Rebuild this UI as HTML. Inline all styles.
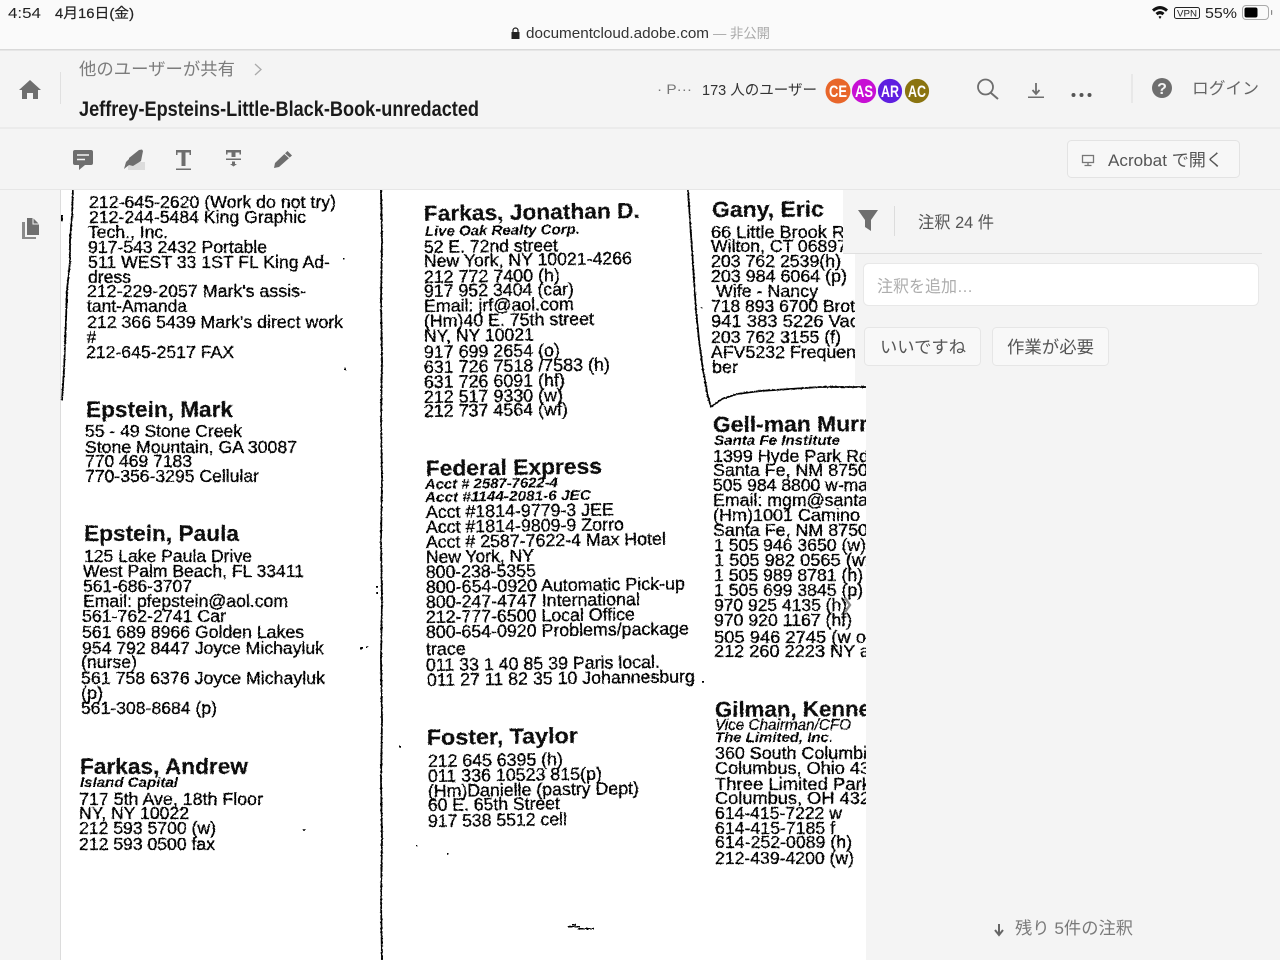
<!DOCTYPE html>
<html lang="ja">
<head>
<meta charset="utf-8">
<title>Jeffrey-Epsteins-Little-Black-Book-unredacted</title>
<style>
html,body{margin:0;padding:0;width:1280px;height:960px;overflow:hidden;background:#f4f4f4}
svg{display:block;position:absolute;left:0;top:0}
text{font-family:"Liberation Sans","Noto Sans CJK JP",sans-serif}
.b{font-size:17.7px;fill:#000;stroke:#000;stroke-width:.3px}
.h{font-size:22px;font-weight:bold;fill:#111;stroke:#111;stroke-width:.15px}
.i{font-size:14px;font-weight:bold;font-style:italic;fill:#000}
.v{font-size:16px;font-style:italic;fill:#000;stroke:#000;stroke-width:.2px}
.r{transform-box:fill-box;transform-origin:0 100%;transform:rotate(-.8deg)}
.q{transform-box:fill-box;transform-origin:0 100%;transform:rotate(-.3deg)}
.u{font-size:16.5px;fill:#555}
</style>
</head>
<body>
<svg width="1280" height="960" viewBox="0 0 1280 960" xmlns="http://www.w3.org/2000/svg">
<defs>
<filter id="scan" filterUnits="userSpaceOnUse" x="0" y="180" width="900" height="780">
<feTurbulence type="fractalNoise" baseFrequency=".55" numOctaves="2" seed="4" result="n"/>
<feDisplacementMap in="SourceGraphic" in2="n" scale="1.8" xChannelSelector="R" yChannelSelector="G"/>
</filter>
</defs>
<!-- backgrounds -->
<rect width="1280" height="960" fill="#f4f4f4"/>
<rect x="61" y="190" width="805" height="770" fill="#fff"/>
<rect x="60" y="190" width="1" height="770" fill="#dcdcdc"/>

<g filter="url(#scan)">
<!-- document rules -->
<g fill="none" stroke="#000" stroke-linejoin="round">
<polyline stroke-width="1.800" points="73,190 72,215 70,240 70,262 67,290 66,320 65,345 64,370 62,400"/>
<polyline stroke-width="1.800" points="381,190 382,240 381,300 382,360 381,420 382,480 381,540 382,600 381,660 382,720 381,780 382,840 381,900 382,960"/>
<polyline stroke-width="1.800" points="688,190 690,220 692,250 694,280 696,310 699,340 703,370 708,397 711,407"/>
<polyline stroke-width="1.800" points="711,407 722,399 737,394 760,391 790,389 820,387 866,387"/>
</g>
<!-- specks -->
<g fill="#000">
<rect x="61" y="215" width="2" height="6"/><rect x="344" y="368" width="2" height="2"/><rect x="343" y="258" width="1.500" height="1.500"/>
<rect x="376" y="586" width="2" height="2"/><rect x="376" y="592" width="2" height="2"/><rect x="360" y="647" width="3" height="2"/><rect x="366" y="646" width="2" height="2"/><rect x="303" y="829" width="2" height="2"/>
<rect x="399" y="746" width="2" height="1.500"/><rect x="416" y="845" width="1.500" height="1.500"/><rect x="447" y="853" width="1.500" height="1.500"/>
<rect x="702" y="681" width="2" height="1.500"/><rect x="701" y="307" width="1.500" height="1.500"/>
<rect x="568" y="926" width="12" height="1.500"/><rect x="578" y="928" width="16" height="1.500"/><rect x="572" y="924" width="4" height="1.500"/>
</g>

<!-- column 1 -->
<text class="b" x="89" y="208" textLength="247" lengthAdjust="spacingAndGlyphs">212-645-2620 (Work do not try)</text>
<text class="b" x="89" y="223" textLength="217" lengthAdjust="spacingAndGlyphs">212-244-5484 King Graphic</text>
<text class="b" x="88" y="238" textLength="80" lengthAdjust="spacingAndGlyphs">Tech., Inc.</text>
<text class="b" x="88" y="253" textLength="179" lengthAdjust="spacingAndGlyphs">917-543 2432 Portable</text>
<text class="b" x="88" y="268" textLength="242" lengthAdjust="spacingAndGlyphs">511 WEST 33 1ST FL King Ad-</text>
<text class="b" x="88" y="283" textLength="43" lengthAdjust="spacingAndGlyphs">dress</text>
<text class="b" x="87" y="297" textLength="219" lengthAdjust="spacingAndGlyphs">212-229-2057 Mark's assis-</text>
<text class="b" x="87" y="312" textLength="100" lengthAdjust="spacingAndGlyphs">tant-Amanda</text>
<text class="b" x="87" y="328" textLength="256" lengthAdjust="spacingAndGlyphs">212 366 5439 Mark's direct work</text>
<text class="b" x="87" y="343" textLength="9" lengthAdjust="spacingAndGlyphs">#</text>
<text class="b" x="86" y="358" textLength="148" lengthAdjust="spacingAndGlyphs">212-645-2517 FAX</text>

<text class="h" x="86" y="417" textLength="147" lengthAdjust="spacingAndGlyphs">Epstein, Mark</text>
<text class="b" x="85" y="437" textLength="157" lengthAdjust="spacingAndGlyphs">55 - 49 Stone Creek</text>
<text class="b" x="85" y="453" textLength="212" lengthAdjust="spacingAndGlyphs">Stone Mountain, GA 30087</text>
<text class="b" x="85" y="467" textLength="107" lengthAdjust="spacingAndGlyphs">770 469 7183</text>
<text class="b" x="85" y="482" textLength="174" lengthAdjust="spacingAndGlyphs">770-356-3295 Cellular</text>

<text class="h" x="84" y="541" textLength="155" lengthAdjust="spacingAndGlyphs">Epstein, Paula</text>
<text class="b" x="84" y="562" textLength="168" lengthAdjust="spacingAndGlyphs">125 Lake Paula Drive</text>
<text class="b" x="83" y="577" textLength="221" lengthAdjust="spacingAndGlyphs">West Palm Beach, FL 33411</text>
<text class="b" x="83" y="592" textLength="109" lengthAdjust="spacingAndGlyphs">561-686-3707</text>
<text class="b" x="83" y="607" textLength="205" lengthAdjust="spacingAndGlyphs">Email: pfepstein@aol.com</text>
<text class="b" x="82" y="622" textLength="144" lengthAdjust="spacingAndGlyphs">561-762-2741 Car</text>
<text class="b" x="82" y="638" textLength="222" lengthAdjust="spacingAndGlyphs">561 689 8966 Golden Lakes</text>
<text class="b" x="82" y="654" textLength="242" lengthAdjust="spacingAndGlyphs">954 792 8447 Joyce Michayluk</text>
<text class="b" x="81" y="668" textLength="56" lengthAdjust="spacingAndGlyphs">(nurse)</text>
<text class="b" x="81" y="684" textLength="244" lengthAdjust="spacingAndGlyphs">561 758 6376 Joyce Michayluk</text>
<text class="b" x="81" y="699" textLength="22" lengthAdjust="spacingAndGlyphs">(p)</text>
<text class="b" x="81" y="714" textLength="136" lengthAdjust="spacingAndGlyphs">561-308-8684 (p)</text>

<text class="h" x="80" y="774" textLength="168" lengthAdjust="spacingAndGlyphs">Farkas, Andrew</text>
<text class="i" x="80" y="787" textLength="98" lengthAdjust="spacingAndGlyphs">Island Capital</text>
<text class="b" x="79" y="805" textLength="184" lengthAdjust="spacingAndGlyphs">717 5th Ave, 18th Floor</text>
<text class="b" x="79" y="819" textLength="110" lengthAdjust="spacingAndGlyphs">NY, NY 10022</text>
<text class="b" x="79" y="834" textLength="137" lengthAdjust="spacingAndGlyphs">212 593 5700 (w)</text>
<text class="b" x="79" y="850" textLength="136" lengthAdjust="spacingAndGlyphs">212 593 0500 fax</text>

<!-- column 2 -->
<text class="h r" x="424" y="221" textLength="216" lengthAdjust="spacingAndGlyphs">Farkas, Jonathan D.</text>
<text class="i r" x="425" y="236" textLength="155" lengthAdjust="spacingAndGlyphs">Live Oak Realty Corp.</text>
<text class="b r" x="424" y="253" textLength="134" lengthAdjust="spacingAndGlyphs">52 E. 72nd street</text>
<text class="b r" x="424" y="267" textLength="208" lengthAdjust="spacingAndGlyphs">New York, NY 10021-4266</text>
<text class="b r" x="424" y="283" textLength="136" lengthAdjust="spacingAndGlyphs">212 772 7400 (h)</text>
<text class="b r" x="424" y="297" textLength="150" lengthAdjust="spacingAndGlyphs">917 952 3404 (car)</text>
<text class="b r" x="424" y="312" textLength="150" lengthAdjust="spacingAndGlyphs">Email: jrf@aol.com</text>
<text class="b r" x="424" y="327" textLength="170" lengthAdjust="spacingAndGlyphs">(Hm)40 E. 75th street</text>
<text class="b r" x="424" y="342" textLength="110" lengthAdjust="spacingAndGlyphs">NY, NY 10021</text>
<text class="b r" x="424" y="358" textLength="136" lengthAdjust="spacingAndGlyphs">917 699 2654 (o)</text>
<text class="b r" x="424" y="373" textLength="186" lengthAdjust="spacingAndGlyphs">631 726 7518 /7583 (h)</text>
<text class="b r" x="424" y="388" textLength="141" lengthAdjust="spacingAndGlyphs">631 726 6091 (hf)</text>
<text class="b r" x="424" y="403" textLength="139" lengthAdjust="spacingAndGlyphs">212 517 9330 (w)</text>
<text class="b r" x="424" y="417" textLength="144" lengthAdjust="spacingAndGlyphs">212 737 4564 (wf)</text>

<text class="h r" x="426" y="476" textLength="176" lengthAdjust="spacingAndGlyphs">Federal Express</text>
<text class="i r" x="425" y="489" textLength="133" lengthAdjust="spacingAndGlyphs">Acct # 2587-7622-4</text>
<text class="i r" x="425" y="502" textLength="166" lengthAdjust="spacingAndGlyphs">Acct #1144-2081-6 JEC</text>
<text class="b r" x="426" y="518" textLength="188" lengthAdjust="spacingAndGlyphs">Acct #1814-9779-3 JEE</text>
<text class="b r" x="426" y="533" textLength="198" lengthAdjust="spacingAndGlyphs">Acct #1814-9809-9 Zorro</text>
<text class="b r" x="426" y="548" textLength="240" lengthAdjust="spacingAndGlyphs">Acct # 2587-7622-4 Max Hotel</text>
<text class="b r" x="426" y="563" textLength="108" lengthAdjust="spacingAndGlyphs">New York, NY</text>
<text class="b r" x="426" y="578" textLength="110" lengthAdjust="spacingAndGlyphs">800-238-5355</text>
<text class="b r" x="426" y="593" textLength="259" lengthAdjust="spacingAndGlyphs">800-654-0920 Automatic Pick-up</text>
<text class="b r" x="426" y="608" textLength="214" lengthAdjust="spacingAndGlyphs">800-247-4747 International</text>
<text class="b r" x="426" y="623" textLength="209" lengthAdjust="spacingAndGlyphs">212-777-6500 Local Office</text>
<text class="b r" x="426" y="638" textLength="263" lengthAdjust="spacingAndGlyphs">800-654-0920 Problems/package</text>
<text class="b r" x="426" y="655" textLength="40" lengthAdjust="spacingAndGlyphs">trace</text>
<text class="b r" x="426" y="671" textLength="234" lengthAdjust="spacingAndGlyphs">011 33 1 40 85 39 Paris local.</text>
<text class="b r" x="427" y="686" textLength="268" lengthAdjust="spacingAndGlyphs">011 27 11 82 35 10 Johannesburg</text>

<text class="h r" x="427" y="745" textLength="151" lengthAdjust="spacingAndGlyphs">Foster, Taylor</text>
<text class="b r" x="428" y="767" textLength="135" lengthAdjust="spacingAndGlyphs">212 645 6395 (h)</text>
<text class="b r" x="428" y="782" textLength="174" lengthAdjust="spacingAndGlyphs">011 336 10523 815(p)</text>
<text class="b r" x="428" y="797" textLength="211" lengthAdjust="spacingAndGlyphs">(Hm)Danielle (pastry Dept)</text>
<text class="b r" x="428" y="811" textLength="132" lengthAdjust="spacingAndGlyphs">60 E. 65th Street</text>
<text class="b r" x="428" y="827" textLength="139" lengthAdjust="spacingAndGlyphs">917 538 5512 cell</text>

<!-- column 3 -->
<text class="h q" x="712" y="217" textLength="112" lengthAdjust="spacingAndGlyphs">Gany, Eric</text>
<text class="b" x="711" y="238" textLength="144" lengthAdjust="spacingAndGlyphs">66 Little Brook Rd</text>
<text class="b" x="711" y="252" textLength="136" lengthAdjust="spacingAndGlyphs">Wilton, CT 06897</text>
<text class="b" x="711" y="267" textLength="130" lengthAdjust="spacingAndGlyphs">203 762 2539(h)</text>
<text class="b" x="711" y="282" textLength="136" lengthAdjust="spacingAndGlyphs">203 984 6064 (p)</text>
<text class="b" x="716" y="297" textLength="102" lengthAdjust="spacingAndGlyphs">Wife - Nancy</text>
<text class="b" x="711" y="312" textLength="144" lengthAdjust="spacingAndGlyphs">718 893 6700 Brot</text>
<text class="b" x="711" y="327" textLength="148" lengthAdjust="spacingAndGlyphs">941 383 5226 Vac</text>
<text class="b" x="711" y="343" textLength="130" lengthAdjust="spacingAndGlyphs">203 762 3155 (f)</text>
<text class="b" x="711" y="358" textLength="145" lengthAdjust="spacingAndGlyphs">AFV5232 Frequen</text>
<text class="b" x="712" y="373" textLength="26" lengthAdjust="spacingAndGlyphs">ber</text>

<text class="h q" x="713" y="432" textLength="155" lengthAdjust="spacingAndGlyphs">Gell-man Murr</text>
<text class="i" x="714" y="445" textLength="126" lengthAdjust="spacingAndGlyphs">Santa Fe Institute</text>
<text class="b" x="713" y="462" textLength="156" lengthAdjust="spacingAndGlyphs">1399 Hyde Park Rd</text>
<text class="b" x="713" y="476" textLength="155" lengthAdjust="spacingAndGlyphs">Santa Fe, NM 8750</text>
<text class="b" x="713" y="491" textLength="155" lengthAdjust="spacingAndGlyphs">505 984 8800 w-ma</text>
<text class="b" x="713" y="506" textLength="155" lengthAdjust="spacingAndGlyphs">Email: mgm@santa</text>
<text class="b" x="713" y="521" textLength="157" lengthAdjust="spacingAndGlyphs">(Hm)1001 Camino I</text>
<text class="b" x="713" y="536" textLength="155" lengthAdjust="spacingAndGlyphs">Santa Fe, NM 8750</text>
<text class="b" x="714" y="551" textLength="152" lengthAdjust="spacingAndGlyphs">1 505 946 3650 (w)</text>
<text class="b" x="714" y="566" textLength="156" lengthAdjust="spacingAndGlyphs">1 505 982 0565 (wf</text>
<text class="b" x="714" y="581" textLength="149" lengthAdjust="spacingAndGlyphs">1 505 989 8781 (h)</text>
<text class="b" x="714" y="596" textLength="149" lengthAdjust="spacingAndGlyphs">1 505 699 3845 (p)</text>
<text class="b" x="714" y="611" textLength="133" lengthAdjust="spacingAndGlyphs">970 925 4135 (h)</text>
<text class="b" x="714" y="626" textLength="138" lengthAdjust="spacingAndGlyphs">970 920 1167 (hf)</text>
<text class="b" x="714" y="643" textLength="156" lengthAdjust="spacingAndGlyphs">505 946 2745 (w ol</text>
<text class="b" x="714" y="657" textLength="156" lengthAdjust="spacingAndGlyphs">212 260 2223 NY a</text>

<text class="h q" x="715" y="717" textLength="156" lengthAdjust="spacingAndGlyphs">Gilman, Kenne</text>
<text class="v" x="715" y="730" textLength="136" lengthAdjust="spacingAndGlyphs">Vice Chairman/CFO</text>
<text class="i" x="715" y="742" textLength="118" lengthAdjust="spacingAndGlyphs">The Limited, Inc.</text>
<text class="b" x="715" y="759" textLength="152" lengthAdjust="spacingAndGlyphs">360 South Columbi</text>
<text class="b" x="715" y="774" textLength="155" lengthAdjust="spacingAndGlyphs">Columbus, Ohio 43</text>
<text class="b" x="715" y="790" textLength="156" lengthAdjust="spacingAndGlyphs">Three Limited Park</text>
<text class="b" x="715" y="804" textLength="155" lengthAdjust="spacingAndGlyphs">Columbus, OH 432</text>
<text class="b" x="715" y="819" textLength="127" lengthAdjust="spacingAndGlyphs">614-415-7222 w</text>
<text class="b" x="715" y="834" textLength="120" lengthAdjust="spacingAndGlyphs">614-415-7185 f</text>
<text class="b" x="715" y="848" textLength="137" lengthAdjust="spacingAndGlyphs">614-252-0089 (h)</text>
<text class="b" x="715" y="864" textLength="139" lengthAdjust="spacingAndGlyphs">212-439-4200 (w)</text>
</g>
<path d="M845 598l5 7-5 7" fill="none" stroke="#888" stroke-width="2.4"/>

<!-- comments panel -->
<path d="M843 190H1280V960H866V385H855V253H843Z" fill="#f4f4f4"/>
<rect x="843" y="253" width="419" height="1" fill="#e0e0e0"/>
<path d="M858 210H878L871 220V231L865 227V220Z" fill="#6e6e6e"/>
<rect x="894" y="206" width="1" height="30" fill="#dcdcdc"/>
<text class="u" x="918" y="228" textLength="76" lengthAdjust="spacingAndGlyphs">注釈 24 件</text>
<rect x="863.5" y="263.5" width="395" height="42" rx="5" fill="#fff" stroke="#e8e8e8"/>
<text x="877" y="292" font-size="16.5" fill="#adadad" textLength="96" lengthAdjust="spacingAndGlyphs">注釈を追加…</text>
<rect x="864.5" y="327.5" width="116" height="38" rx="4" fill="#f8f8f8" stroke="#e6e6e6"/>
<rect x="992.5" y="327.5" width="116" height="38" rx="4" fill="#f8f8f8" stroke="#e6e6e6"/>
<text x="880" y="353" font-size="17" fill="#555" textLength="86" lengthAdjust="spacingAndGlyphs">いいですね</text>
<text x="1007" y="353" font-size="17" fill="#555" textLength="87" lengthAdjust="spacingAndGlyphs">作業が必要</text>
<path d="M999 924V934M995 930l4 5 4-5" fill="none" stroke="#666" stroke-width="2"/>
<text x="1015" y="934" font-size="17" fill="#7a7a7a" textLength="118" lengthAdjust="spacingAndGlyphs">残り 5件の注釈</text>

<!-- left rail -->
<rect x="0" y="190" width="60" height="770" fill="#f4f4f4"/>
<path d="M27 218H33L39 224V235H27Z" fill="#6e6e6e"/>
<path d="M22 222H25V237H36V239H22Z" fill="#8a8a8a"/>
<path d="M33 218V224H39" fill="none" stroke="#f4f4f4" stroke-width="1"/>

<!-- status + url bar -->
<rect width="1280" height="49" fill="#fafafa"/>
<rect y="49" width="1280" height="1.5" fill="#d9d9d9"/>
<text x="8" y="18" font-size="14.5" fill="#222" textLength="33" lengthAdjust="spacingAndGlyphs">4:54</text>
<text x="55" y="18" font-size="14" fill="#222" stroke="#222" stroke-width=".2" textLength="79" lengthAdjust="spacingAndGlyphs">4月16日(金)</text>
<path d="M1152 9.500Q1160 2.500 1168 9.500L1166 11.800Q1160 6.800 1154 11.800ZM1155.500 13Q1160 9 1164.500 13L1162.500 15.200Q1160 13.200 1157.500 15.200ZM1160 19L1158.500 16.700Q1160 15.500 1161.500 16.700Z" fill="#111"/>
<rect x="1174.500" y="7.500" width="25" height="11" rx="2" fill="none" stroke="#222"/>
<text x="1177" y="16.500" font-size="9" fill="#222" textLength="20" lengthAdjust="spacingAndGlyphs">VPN</text>
<text x="1205" y="18" font-size="14.5" fill="#222" textLength="32" lengthAdjust="spacingAndGlyphs">55%</text>
<rect x="1242.500" y="5.500" width="26" height="14" rx="3.500" fill="none" stroke="#aaa"/>
<rect x="1244.500" y="7.500" width="13" height="10" rx="2" fill="#000"/>
<rect x="1271" y="10" width="1.200" height="5" rx=".6" fill="#888"/>
<path d="M511.500 32h8v7h-8z" fill="#222"/>
<path d="M513 32v-1.500a2.500 2.500 0 0 1 5 0V32" fill="none" stroke="#222" stroke-width="1.200"/>
<text x="526" y="38" font-size="14.500" fill="#333" textLength="183" lengthAdjust="spacingAndGlyphs">documentcloud.adobe.com</text>
<text x="713" y="38" font-size="13.500" fill="#aaa" textLength="57" lengthAdjust="spacingAndGlyphs">— 非公開</text>

<!-- title bar -->
<rect y="51" width="1280" height="77" fill="#f4f4f4"/>
<rect y="127.500" width="1280" height="1" fill="#e2e2e2"/>
<path d="M30 80L41 90H38V99H33V93H27V99H22V90H19Z" fill="#6e6e6e"/>
<rect x="60" y="72" width="1" height="32" fill="#e0e0e0"/>
<text x="79" y="75" font-size="17" fill="#7c7c7c" textLength="156" lengthAdjust="spacingAndGlyphs">他のユーザーが共有</text>
<path d="M255 64l6 5.500-6 5.500" fill="none" stroke="#aaa" stroke-width="1.300"/>
<text x="79" y="116" font-size="21" font-weight="bold" fill="#1a1a1a" textLength="400" lengthAdjust="spacingAndGlyphs">Jeffrey-Epsteins-Little-Black-Book-unredacted</text>
<text x="657" y="94" font-size="14" fill="#777" textLength="35" lengthAdjust="spacingAndGlyphs">· P···</text>
<text x="702" y="95" font-size="14.500" fill="#333" textLength="115" lengthAdjust="spacingAndGlyphs">173 人のユーザー</text>
<g font-size="17" font-weight="bold" fill="#fff">
<ellipse cx="838" cy="91" rx="12.500" ry="12.500" fill="#e8662a"/>
<ellipse cx="864" cy="91" rx="12.500" ry="12.500" fill="#c70fd4" stroke="#f4f4f4" stroke-width=".8"/>
<ellipse cx="890" cy="91" rx="12.500" ry="12.500" fill="#5f1fe0" stroke="#f4f4f4" stroke-width=".8"/>
<ellipse cx="917" cy="91" rx="12.500" ry="12.500" fill="#8a7410" stroke="#f4f4f4" stroke-width=".8"/>
<text x="829" y="97" textLength="18" lengthAdjust="spacingAndGlyphs">CE</text>
<text x="855" y="97" textLength="18" lengthAdjust="spacingAndGlyphs">AS</text>
<text x="881" y="97" textLength="18" lengthAdjust="spacingAndGlyphs">AR</text>
<text x="908" y="97" textLength="18" lengthAdjust="spacingAndGlyphs">AC</text>
</g>
<circle cx="985.500" cy="87" r="7.500" fill="none" stroke="#6e6e6e" stroke-width="1.800"/>
<path d="M991 93L998 99" stroke="#6e6e6e" stroke-width="2"/>
<path d="M1036 83V93M1032.500 90l3.500 4 3.500-4" fill="none" stroke="#6e6e6e" stroke-width="1.800"/>
<rect x="1028" y="96.500" width="16" height="1.500" fill="#6e6e6e"/>
<circle cx="1073.500" cy="95" r="2" fill="#555"/><circle cx="1081.500" cy="95" r="2" fill="#555"/><circle cx="1089.500" cy="95" r="2" fill="#555"/>
<rect x="1131.500" y="74" width="1" height="29" fill="#dcdcdc"/>
<circle cx="1162" cy="88" r="10" fill="#6e6e6e"/>
<text x="1162" y="94" font-size="16" font-weight="bold" fill="#f4f4f4" text-anchor="middle">?</text>
<text x="1192" y="94" font-size="16.500" fill="#666" textLength="67" lengthAdjust="spacingAndGlyphs">ログイン</text>

<!-- toolbar -->
<rect y="128.500" width="1280" height="61" fill="#f4f4f4"/>
<rect y="189" width="1280" height="1" fill="#e6e6e6"/>
<path d="M75 150H91Q93 150 93 152V163Q93 165 91 165H85L79 170V165H75Q73 165 73 163V152Q73 150 75 150Z" fill="#6e6e6e"/>
<path d="M77 155H89M77 159.500H85" stroke="#f4f4f4" stroke-width="1.500"/>
<rect x="128" y="162" width="17" height="8" fill="#dcdcdc"/>
<path d="M139 150L142 149.500L143 151L141 161L133 166L129 165L124 169L126 162L129 159L129 158Z" fill="#6e6e6e"/>
<path d="M176 150H191V155H189.500V152.500H185.500V166H181.500V152.500H177.500V155H176Z" fill="#6e6e6e"/>
<rect x="176" y="168.500" width="15" height="1.500" fill="#6e6e6e"/>
<path d="M226 150H241V154.500H239.500V152.500H235.500V157H231.500V152.500H227.500V154.500H226Z" fill="#6e6e6e"/>
<rect x="226" y="158.500" width="15" height="1.500" fill="#6e6e6e"/>
<path d="M232 161.500H235V164H237L233.500 166.500L230 164H232Z" fill="#6e6e6e"/>
<path d="M287.500 151L292 155.500L279 167L274 168L275 163Z" fill="#6e6e6e"/>
<path d="M284.500 153.500L289.500 158" stroke="#f4f4f4" stroke-width="1"/>
<rect x="1067.500" y="140.500" width="172" height="37" rx="4" fill="#f7f7f7" stroke="#e3e3e3"/>
<rect x="1082.500" y="155.500" width="11" height="7" fill="none" stroke="#777" stroke-width="1.300"/>
<path d="M1088 163V165M1084.500 165.500H1091.500" stroke="#777" stroke-width="1.300"/>
<text x="1108" y="166" font-size="17" fill="#555" textLength="115" lengthAdjust="spacingAndGlyphs">Acrobat で開く</text>
</svg>
</body>
</html>
